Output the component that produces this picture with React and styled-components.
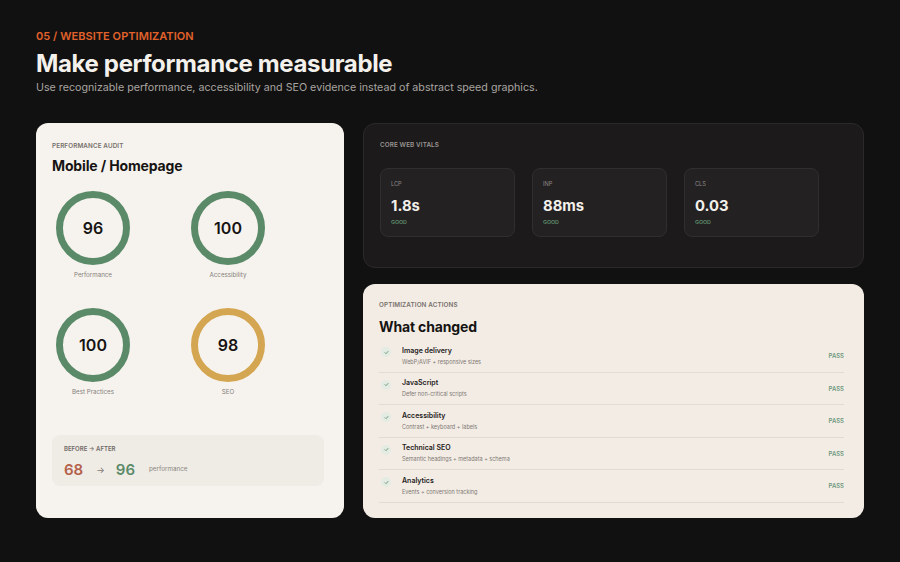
import React from "react";
import styled, { createGlobalStyle } from "styled-components";

const Global = createGlobalStyle`
  html, body { margin: 0; padding: 0; background: #121111; }
  body { font-family: Inter, "Noto Sans", sans-serif; -webkit-font-smoothing: antialiased; }
  * { box-sizing: border-box; }
`;

const Page = styled.div`
  width: 900px;
  height: 562px;
  padding: 29px 36px 0 36px;
  background: #121111;
  overflow: hidden;
`;

const Eyebrow = styled.div`
  color: #e2622b;
  font-size: 11px;
  font-weight: 600;
  line-height: 15px;
  letter-spacing: 0.005em;
`;

const Title = styled.h1`
  margin: 5px 0 0 0;
  color: #f4f1ec;
  font-size: 24px;
  font-weight: 700;
  line-height: 29px;
  letter-spacing: -0.015em;
`;

const Subtitle = styled.p`
  margin: 2px 0 0 0;
  color: #a8a4a0;
  font-size: 10.7px;
  line-height: 15px;
`;

const Grid = styled.div`
  margin-top: 28px;
  display: grid;
  grid-template-columns: 308px 501px;
  column-gap: 19px;
  height: 395px;
`;

const RightCol = styled.div`
  display: grid;
  grid-template-rows: 145px 234px;
  row-gap: 16px;
  min-height: 0;
`;

const LightCard = styled.section`
  background: ${(p) => p.$bg || "#f6f3ee"};
  border-radius: 12px;
  padding: ${(p) => p.$pad || "18px 16px"};
  display: flex;
  flex-direction: column;
  min-height: 0;
  overflow: hidden;
`;

const DarkCard = styled.section`
  background: #1c1a1a;
  border: 1px solid #2c2929;
  border-radius: 12px;
  padding: 16px 16px;
`;

const Label = styled.div`
  font-size: 6.3px;
  font-weight: 600;
  line-height: 10px;
  letter-spacing: 0.02em;
  color: ${(p) => (p.$dark ? "#9a9593" : "#77716c")};
`;

const CardTitle = styled.h2`
  margin: ${(p) => p.$mt || "6px"} 0 0 0;
  font-size: 14px;
  font-weight: 700;
  line-height: 18px;
  color: #161413;
  letter-spacing: -0.01em;
`;

const Gauges = styled.div`
  margin-top: 16px;
  padding-left: 4px;
  display: grid;
  grid-template-columns: 74px 74px;
  column-gap: 61px;
  row-gap: 28px;
`;

const GaugeItem = styled.div`
  display: flex;
  flex-direction: column;
  align-items: center;
  gap: 5px;
`;

const Ring = styled.div`
  position: relative;
  width: 74px;
  height: 74px;
  svg { display: block; }
`;

const RingValue = styled.span`
  position: absolute;
  inset: 0;
  display: flex;
  align-items: center;
  justify-content: center;
  font-size: 16px;
  font-weight: 600;
  color: #161413;
`;

const GaugeLabel = styled.span`
  font-size: 6.2px;
  line-height: 10px;
  color: #85807b;
  white-space: nowrap;
`;

const BeforeAfter = styled.div`
  margin-top: 38px;
  margin-right: 4px;
  background: #efebe5;
  border-radius: 8px;
  padding: 9px 12px 6px 12px;
`;

const BALabel = styled.div`
  font-size: 6px;
  font-weight: 600;
  line-height: 9px;
  color: #6f6a66;
`;

const BARow = styled.div`
  margin-top: 5px;
  display: flex;
  align-items: center;
  height: 22px;
`;

const Score = styled.span`
  font-size: 15px;
  font-weight: 600;
  color: ${(p) => p.$color};
`;

const Arrow = styled.span`
  font-size: 9px;
  color: #7c7772;
  margin: 0 11px 0 13px;
`;

const Small = styled.span`
  margin-left: 14px;
  font-size: 6.3px;
  color: #8a857f;
`;

const Metrics = styled.div`
  margin-top: 18px;
  display: grid;
  grid-template-columns: repeat(3, 135px);
  column-gap: 17px;
`;

const Metric = styled.div`
  height: 69px;
  background: #242122;
  border: 1px solid #322e2f;
  border-radius: 8px;
  padding: 11px 10px;
`;

const MetricName = styled.div`
  font-size: 5.6px;
  line-height: 8px;
  color: #8e8988;
`;

const MetricValue = styled.div`
  margin-top: 9px;
  font-size: 14.8px;
  font-weight: 700;
  line-height: 18px;
  color: #f4f1ec;
`;

const Good = styled.div`
  margin-top: 3px;
  font-size: 5.3px;
  font-weight: 600;
  line-height: 8px;
  color: #5e8c6a;
`;

const List = styled.ul`
  list-style: none;
  margin: 4px 4px 0 0;
  padding: 0;
`;

const Row = styled.li`
  display: flex;
  align-items: center;
  height: 32.5px;
  flex-shrink: 0;
  border-bottom: 1px solid #e2dbd3;
  padding: 0 0 0 2px;
`;

const Check = styled.span`
  width: 10px;
  height: 10px;
  border-radius: 50%;
  background: #e3ebe2;
  display: flex;
  align-items: center;
  justify-content: center;
  margin-right: 11px;
  align-self: flex-start;
  margin-top: 7px;
  svg { display: block; }
`;

const RowText = styled.div`
  flex: 1;
  display: flex;
  flex-direction: column;
`;

const RowTitle = styled.span`
  font-size: 7px;
  font-weight: 600;
  line-height: 10px;
  color: #242120;
`;

const RowSub = styled.span`
  margin-top: 2px;
  font-size: 5.5px;
  line-height: 8px;
  color: #7e7873;
`;

const Pass = styled.span`
  font-size: 6px;
  font-weight: 600;
  color: #6f9a7d;
`;

const gauges = [
  { v: 96, label: "Performance", color: "#5b8a69" },
  { v: 100, label: "Accessibility", color: "#5b8a69" },
  { v: 100, label: "Best Practices", color: "#5b8a69" },
  { v: 98, label: "SEO", color: "#d4a651" },
];

const vitals = [
  { n: "LCP", v: "1.8s" },
  { n: "INP", v: "88ms" },
  { n: "CLS", v: "0.03" },
];

const actions = [
  { t: "Image delivery", s: "WebP/AVIF + responsive sizes" },
  { t: "JavaScript", s: "Defer non-critical scripts" },
  { t: "Accessibility", s: "Contrast + keyboard + labels" },
  { t: "Technical SEO", s: "Semantic headings + metadata + schema" },
  { t: "Analytics", s: "Events + conversion tracking" },
];

function Gauge({ v, label, color }) {
  return (
    <GaugeItem>
      <Ring>
        <svg width="74" height="74" viewBox="0 0 74 74">
          <circle cx="37" cy="37" r="33.5" fill="none" stroke={color} strokeWidth="7" />
        </svg>
        <RingValue>{v}</RingValue>
      </Ring>
      <GaugeLabel>{label}</GaugeLabel>
    </GaugeItem>
  );
}

export default function App() {
  return (
    <Page>
      <Global />
      <Eyebrow>05 / WEBSITE OPTIMIZATION</Eyebrow>
      <Title>Make performance measurable</Title>
      <Subtitle>
        Use recognizable performance, accessibility and SEO evidence instead of abstract speed graphics.
      </Subtitle>
      <Grid>
        <LightCard>
          <Label>PERFORMANCE AUDIT</Label>
          <CardTitle>Mobile / Homepage</CardTitle>
          <Gauges>
            {gauges.map((g) => (
              <Gauge key={g.label} {...g} />
            ))}
          </Gauges>
          <BeforeAfter>
            <BALabel>BEFORE → AFTER</BALabel>
            <BARow>
              <Score $color="#b4604a">68</Score>
              <Arrow>→</Arrow>
              <Score $color="#5b8a69">96</Score>
              <Small>performance</Small>
            </BARow>
          </BeforeAfter>
        </LightCard>
        <RightCol>
          <DarkCard>
            <Label $dark>CORE WEB VITALS</Label>
            <Metrics>
              {vitals.map((m) => (
                <Metric key={m.n}>
                  <MetricName>{m.n}</MetricName>
                  <MetricValue>{m.v}</MetricValue>
                  <Good>GOOD</Good>
                </Metric>
              ))}
            </Metrics>
          </DarkCard>
          <LightCard $bg="#f3ece5" $pad="16px 16px 0 16px">
            <Label>OPTIMIZATION ACTIONS</Label>
            <CardTitle $mt="8px">What changed</CardTitle>
            <List>
              {actions.map((a) => (
                <Row key={a.t}>
                  <Check>
                    <svg width="5" height="5" viewBox="0 0 10 10">
                      <path d="M2 5.2 L4.2 7.4 L8 2.8" fill="none" stroke="#5e8c6a" strokeWidth="1.6" strokeLinecap="round" strokeLinejoin="round" />
                    </svg>
                  </Check>
                  <RowText>
                    <RowTitle>{a.t}</RowTitle>
                    <RowSub>{a.s}</RowSub>
                  </RowText>
                  <Pass>PASS</Pass>
                </Row>
              ))}
            </List>
          </LightCard>
        </RightCol>
      </Grid>
    </Page>
  );
}
